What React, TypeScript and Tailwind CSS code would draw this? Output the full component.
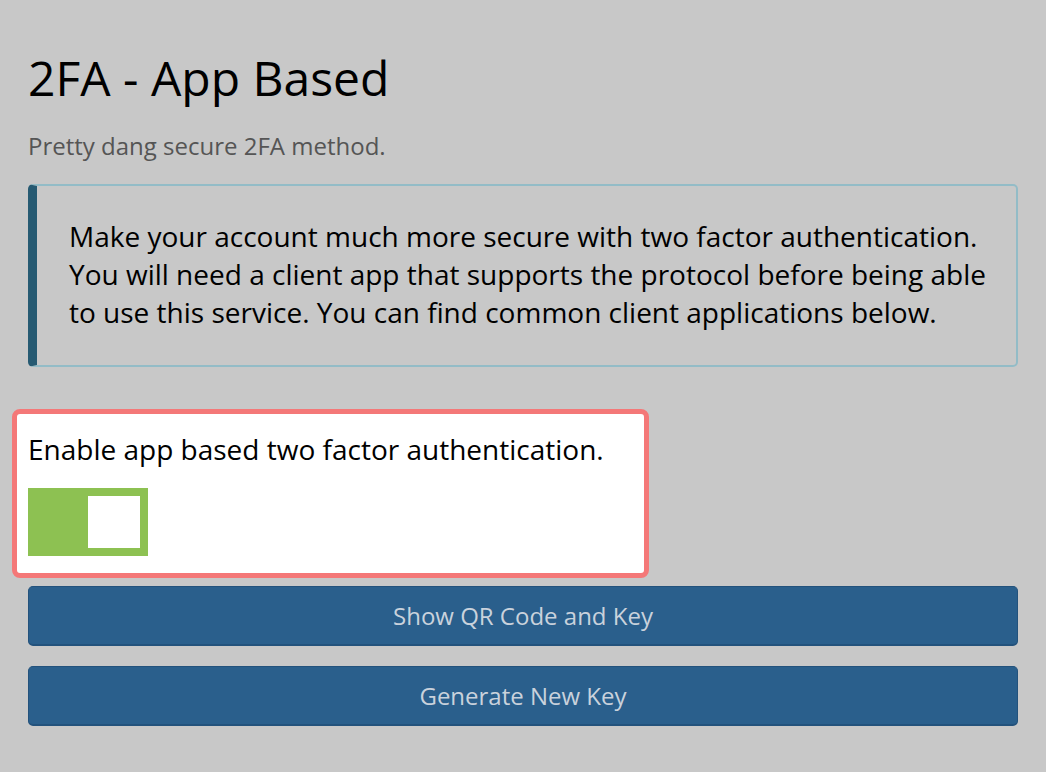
import React, { useState } from 'react'

export default function App() {
  const [enabled, setEnabled] = useState(true)

  return (
    <div
      className="min-h-[772px] w-full bg-[#c8c8c8] px-[28px] pt-[50px]"
      style={{ fontFamily: '"Open Sans", "Noto Sans", sans-serif' }}
    >
      <h1 className="text-[48px] leading-[56px] text-black">2FA - App Based</h1>
      <p className="mt-[24px] text-[24px] leading-[32px] text-[#555]">Pretty dang secure 2FA method.</p>

      {/* info callout */}
      <div className="mt-[22px] flex rounded-[5px] border-2 border-l-[9px] border-[#93bcc7] border-l-[#265a72] pb-[34px] pl-[32px] pr-[20px] pt-[31px]">
        <p className="text-[28px] leading-[38px] text-black">
          Make your account much more secure with two factor authentication. You will need a client app that
          supports the protocol before being able to use this service. You can find common client applications
          below.
        </p>
      </div>

      <div className="-ml-[16px] mt-[42px] w-[637px] rounded-[8px] border-[5px] border-[#f47878] bg-white pb-[17px] pl-[11px] pt-[16px]">
        <p className="text-[28px] leading-[38px] text-black">Enable app based two factor authentication.</p>
        <button
          type="button"
          onClick={() => setEnabled((v) => !v)}
          className={`mt-[20px] flex h-[68px] w-[120px] p-[8px] ${
            enabled ? 'justify-end bg-[#8dc152]' : 'justify-start bg-[#bbb]'
          }`}
          aria-pressed={enabled}
        >
          <span className="h-[52px] w-[52px] bg-white" />
        </button>
      </div>

      <div className="mt-[8px] flex flex-col gap-[20px]">
        <button
          type="button"
          className="h-[60px] w-full rounded-[5px] border border-[#23527c] border-b-2 bg-[#2a5f8c] text-[24px] text-[#c9d2dc]"
        >
          Show QR Code and Key
        </button>
        <button
          type="button"
          className="h-[60px] w-full rounded-[5px] border border-[#23527c] border-b-2 bg-[#2a5f8c] text-[24px] text-[#c9d2dc]"
        >
          Generate New Key
        </button>
      </div>
    </div>
  )
}
